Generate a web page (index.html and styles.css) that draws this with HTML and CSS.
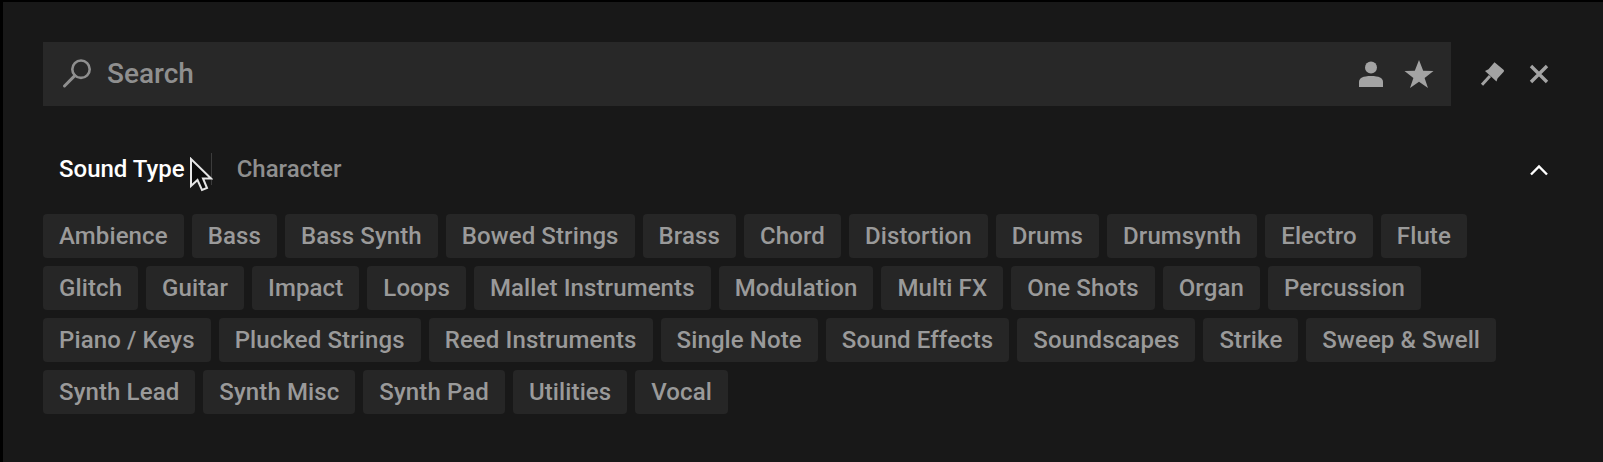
FILE: index.html

```html
<!DOCTYPE html>
<html lang="en">
<head>
    <meta charset="UTF-8">
    <title>Browser Search</title>
    <link rel="stylesheet" href="styles.css">
</head>
<body>
    <div class="panel">
        <div class="search-row">
            <div class="search">
                <svg class="icon-search" viewBox="0 0 30 30" width="30" height="30">
                    <circle cx="19" cy="10.2" r="8.7" fill="none" stroke="#8f8f8f" stroke-width="2.6"/>
                    <path d="M12.8 16.6 L2.5 27" stroke="#8f8f8f" stroke-width="3" stroke-linecap="round"/>
                </svg>
                <span class="search-label">Search</span>
                <svg class="icon-user" viewBox="0 0 26 28" width="26" height="28">
                    <circle cx="13" cy="7.5" r="6" fill="#a3a3a3"/>
                    <path d="M1 27 V22 C1 18 5 16 13 16 C21 16 25 18 25 22 V27 Z" fill="#a3a3a3"/>
                </svg>
                <svg class="icon-star" viewBox="0 0 30 30" width="30" height="30">
                    <path d="M15 1 L19.2 11.7 L29.5 12 L20.6 19 L24 29 L15 22.8 L6 29 L9.4 19 L0.5 12 L10.8 11.7 Z" fill="#a3a3a3"/>
                </svg>
            </div>
            <svg class="icon-pin" viewBox="0 0 26 26" width="26" height="26">
                <path d="M14.5 1.2 L23.5 8.8 Q24.6 9.8 23.7 10.8 L17.5 17.5 L16.5 20.5 L5 10 L8.5 8.2 Z" fill="#a3a3a3"/>
                <path d="M10 15 L2 23.8" stroke="#a3a3a3" stroke-width="3"/>
            </svg>
            <svg class="icon-close" viewBox="0 0 20 20" width="20" height="20">
                <path d="M2 2 L18 18 M18 2 L2 18" stroke="#a3a3a3" stroke-width="3.4"/>
            </svg>
        </div>

        <div class="tabs">
            <span class="tab active">Sound Type</span>
            <span class="tab-sep"></span>
            <span class="tab">Character</span>
            <svg class="icon-up" viewBox="0 0 20 12" width="20" height="12">
                <path d="M2 10.5 L10 2.5 L18 10.5" fill="none" stroke="#fff" stroke-width="2.4"/>
            </svg>
            <svg class="cursor" viewBox="0 0 24 36" width="24" height="36">
                <path d="M2 2 V29 L8.5 23 L13 33 L18 31 L14 21.5 L22 21.5 Z" fill="#0c0c0c" stroke="#e6e6e6" stroke-width="2"/>
            </svg>
        </div>

        <div class="chips">
            <span class="chip">Ambience</span>
            <span class="chip">Bass</span>
            <span class="chip">Bass Synth</span>
            <span class="chip">Bowed Strings</span>
            <span class="chip">Brass</span>
            <span class="chip">Chord</span>
            <span class="chip">Distortion</span>
            <span class="chip">Drums</span>
            <span class="chip">Drumsynth</span>
            <span class="chip">Electro</span>
            <span class="chip">Flute</span>
            <span class="chip">Glitch</span>
            <span class="chip">Guitar</span>
            <span class="chip">Impact</span>
            <span class="chip">Loops</span>
            <span class="chip">Mallet Instruments</span>
            <span class="chip">Modulation</span>
            <span class="chip">Multi FX</span>
            <span class="chip">One Shots</span>
            <span class="chip">Organ</span>
            <span class="chip">Percussion</span>
            <span class="chip">Piano / Keys</span>
            <span class="chip">Plucked Strings</span>
            <span class="chip">Reed Instruments</span>
            <span class="chip">Single Note</span>
            <span class="chip">Sound Effects</span>
            <span class="chip">Soundscapes</span>
            <span class="chip">Strike</span>
            <span class="chip">Sweep &amp; Swell</span>
            <span class="chip">Synth Lead</span>
            <span class="chip">Synth Misc</span>
            <span class="chip">Synth Pad</span>
            <span class="chip">Utilities</span>
            <span class="chip">Vocal</span>
        </div>
    </div>
</body>
</html>
```

FILE: styles.css

```css
html, body {
    margin: 0;
    height: 100%;
    overflow: hidden;
    background-color: #000;
    font-family: Roboto, "Liberation Sans", sans-serif;
    font-weight: 500;
}
.panel {
    box-sizing: border-box;
    height: 100%;
    margin-left: 3px;
    padding: 40px 0 0 40px;
    border-top: 2px solid #000;
    background-color: #181818;
}
.search-row {
    display: flex;
    align-items: center;
}
.search {
    display: flex;
    align-items: center;
    width: 1408px;
    height: 64px;
    box-sizing: border-box;
    padding: 0 17px 0 19px;
    background-color: #282828;
}
.search-label {
    flex: 1;
    margin: 0 0 2px 15px;
    font-size: 28px;
    color: #8f8f8f;
}
.icon-star {
    margin-left: 20px;
}
.icon-pin {
    margin-left: 29px;
}
.icon-close {
    margin-left: 23px;
}
.tabs {
    position: relative;
    display: flex;
    align-items: center;
    width: 1508px;
    height: 32px;
    margin-top: 47px;
    padding-left: 16px;
    box-sizing: border-box;
    font-size: 24px;
}
.tab {
    color: #8f8f8f;
}
.tab.active {
    color: #fff;
}
.tab-sep {
    width: 1px;
    height: 32px;
    margin: 0 25px 0 26px;
    background-color: #3c3c3c;
}
.icon-up {
    margin: 2px 2px 0 auto;
}
.cursor {
    position: absolute;
    left: 146px;
    top: 4px;
}
.chips {
    display: flex;
    flex-wrap: wrap;
    gap: 8px;
    width: 1508px;
    margin-top: 29px;
}
.chip {
    height: 44px;
    line-height: 44px;
    padding: 0 16px;
    border-radius: 4px;
    background-color: #262626;
    font-size: 24px;
    letter-spacing: 0.11px;
    color: #9a9a9a;
}
```
